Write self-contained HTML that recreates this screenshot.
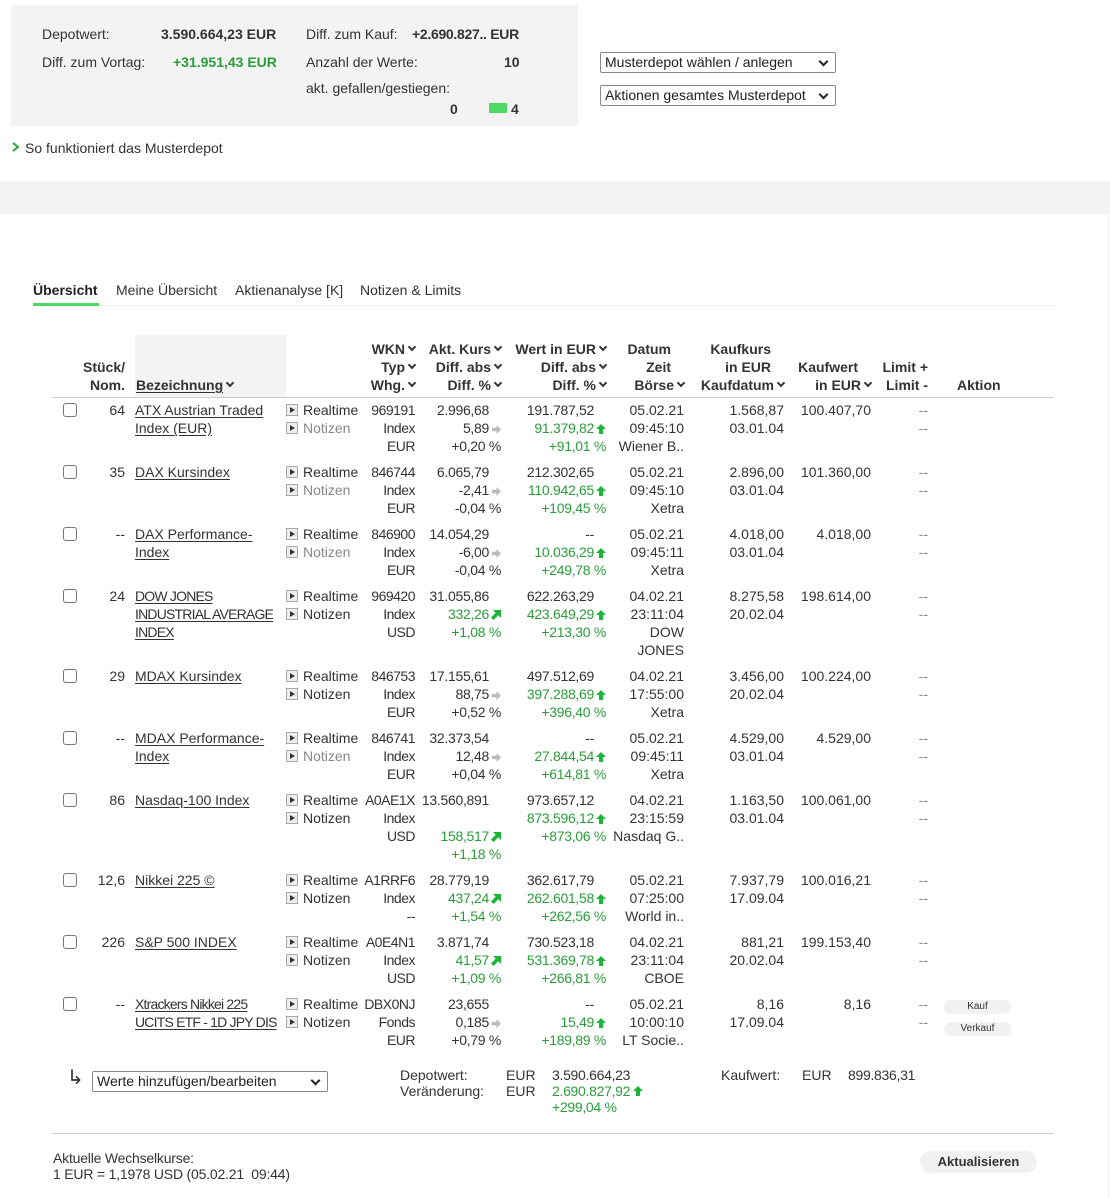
<!DOCTYPE html>
<html><head><meta charset="utf-8">
<style>
*{margin:0;padding:0;box-sizing:border-box}
body{width:1110px;height:1198px;position:relative;background:#fff;font-family:"Liberation Sans",sans-serif;font-size:14px;color:#333;overflow:hidden}
.a{position:absolute;white-space:nowrap;line-height:18px}
.r{text-align:right}
.b{font-weight:bold}
.g{color:#2a9d3a}
.gr{color:#888}
u{text-decoration:underline;text-underline-offset:2px}
.row{position:absolute;left:0;width:1110px;height:80px}
.st{left:80px;width:45px}
.bz{left:135px}
.ic{left:286px}
.wk{left:355px;width:60px;letter-spacing:-0.5px}
.ku{left:405px;width:96px;letter-spacing:-0.3px}
.we{left:500px;width:106px;letter-spacing:-0.3px}
.da{left:610px;width:74px}
.kk{left:700px;width:84px}
.kw{left:790px;width:81px}
.li{left:890px;width:38px}
.p{padding-right:12px;display:inline-block}
.n{letter-spacing:-0.8px}
i{display:inline-block;width:12px;text-align:right}
i svg{vertical-align:-1px}
.cb{position:absolute;left:63px;top:2px;width:14px;height:14px;border:1px solid #767676;border-radius:3px;background:#fff}
.ib{display:inline-block;width:12px;height:12px;border:1px solid #aaa;background:#eee;vertical-align:-1px;margin-right:5px;position:relative}
.ib:after{content:"";position:absolute;left:3px;top:2px;border-left:5px solid #333;border-top:3.5px solid transparent;border-bottom:3.5px solid transparent}
.sel{position:absolute;height:21px;border:1px solid #888;border-radius:2px;background:#fff;font-size:14px;line-height:19px;padding-left:4px;color:#222}
.sel:after{content:"";position:absolute;right:8px;top:5px;width:5px;height:5px;border-right:2px solid #222;border-bottom:2px solid #222;transform:rotate(45deg)}
.hd{font-weight:bold}
.ch{display:inline-block;width:6px;height:6px;border-right:2px solid #333;border-bottom:2px solid #333;transform:rotate(45deg);margin-left:4px;vertical-align:4px}
.pd{padding-right:13px;display:inline-block}
.btn{position:absolute;background:#f0f1f0;border-radius:10px;text-align:center;font-size:10px;color:#333}
</style></head><body>
<svg width="0" height="0" style="position:absolute"><defs>
<symbol id="up" viewBox="0 0 10 10"><path d="M5 0L10 5H7V10H3V5H0Z" fill="#1bb53a"/></symbol>
<symbol id="rt" viewBox="0 0 10 10"><path d="M10 5L5 0V3H0V7H5V10Z" fill="#bbb"/></symbol>
<symbol id="dg" viewBox="0 0 10 10"><path d="M10 0V8L7.3 5.3L2.5 10L0 7.5L4.7 2.7L2 0Z" fill="#1bb53a"/></symbol>
</defs></svg>

<div style="position:absolute;left:11px;top:5px;width:567px;height:121px;background:#f2f3f2"></div>
<div class="a" style="left:42px;top:25px">Depotwert:</div>
<div class="a b" style="left:161px;top:25px">3.590.664,23 EUR</div>
<div class="a" style="left:42px;top:53px">Diff. zum Vortag:</div>
<div class="a b g" style="left:173px;top:53px">+31.951,43 EUR</div>
<div class="a" style="left:306px;top:25px">Diff. zum Kauf:</div>
<div class="a b" style="left:412px;top:25px;letter-spacing:-0.3px">+2.690.827.. EUR</div>
<div class="a" style="left:306px;top:53px">Anzahl der Werte:</div>
<div class="a b" style="left:504px;top:53px">10</div>
<div class="a" style="left:306px;top:79px">akt. gefallen/gestiegen:</div>
<div class="a b" style="left:450px;top:100px">0</div>
<div style="position:absolute;left:489px;top:103px;width:18px;height:10px;background:#4cd964"></div>
<div class="a b" style="left:511px;top:100px">4</div>
<svg style="position:absolute;left:12px;top:142px" width="8" height="10"><path d="M1 1L6 5L1 9" stroke="#3aa84a" stroke-width="2.2" fill="none"/></svg>
<div class="a" style="left:25px;top:139px">So funktioniert das Musterdepot</div>

<div class="sel" style="left:600px;top:52px;width:236px">Musterdepot wählen / anlegen</div>
<div class="sel" style="left:600px;top:85px;width:236px">Aktionen gesamtes Musterdepot</div>

<div style="position:absolute;left:0;top:181px;width:1110px;height:33px;background:#f2f3f2"></div>
<div style="position:absolute;left:1108px;top:214px;width:1px;height:984px;background:#eee"></div>

<div class="a b" style="left:33px;top:281px;color:#222">Übersicht</div>
<div class="a" style="left:116px;top:281px">Meine Übersicht</div>
<div class="a" style="left:235px;top:281px">Aktienanalyse [K]</div>
<div class="a" style="left:360px;top:281px">Notizen &amp; Limits</div>
<div style="position:absolute;left:33px;top:305px;width:1022px;height:1px;background:#eee"></div>
<div style="position:absolute;left:33px;top:303px;width:66px;height:3px;background:#4cd964"></div>

<div style="position:absolute;left:135px;top:335px;width:151px;height:62px;background:#f2f3f2"></div>
<div class="a hd r" style="left:70px;width:55px;top:358px">Stück/<br>Nom.</div>
<div class="a hd" style="left:136px;top:376px"><u>Bezeichnung</u><span class="ch"></span></div>
<div class="a hd r" style="left:340px;width:75px;top:340px">WKN<span class="ch"></span><br>Typ<span class="ch"></span><br>Whg.<span class="ch"></span></div>
<div class="a hd r" style="left:405px;width:96px;top:340px">Akt. Kurs<span class="ch"></span><br>Diff. abs<span class="ch"></span><br>Diff. %<span class="ch"></span></div>
<div class="a hd r" style="left:500px;width:106px;top:340px">Wert in EUR<span class="ch"></span><br>Diff. abs<span class="ch"></span><br>Diff. %<span class="ch"></span></div>
<div class="a hd r" style="left:600px;width:84px;top:340px"><span class="pd">Datum</span><br><span class="pd">Zeit</span><br>Börse<span class="ch"></span></div>
<div class="a hd r" style="left:680px;width:104px;top:340px"><span class="pd">Kaufkurs</span><br><span class="pd">in EUR</span><br>Kaufdatum<span class="ch"></span></div>
<div class="a hd r" style="left:770px;width:101px;top:358px"><span class="pd">Kaufwert</span><br>in EUR<span class="ch"></span></div>
<div class="a hd r" style="left:870px;width:58px;top:358px">Limit +<br>Limit -</div>
<div class="a hd" style="left:957px;top:376px">Aktion</div>
<div style="position:absolute;left:52px;top:397px;width:1002px;height:1px;background:#ccc"></div>

<!-- row 1 -->
<div class="row" style="top:401px"><div class="cb"></div>
<div class="a r st">64</div>
<div class="a bz"><u>ATX Austrian Traded</u><br><u>Index (EUR)</u></div>
<div class="a ic"><span class="ib"></span>Realtime<br><span class="ib"></span><span class="gr">Notizen</span></div>
<div class="a r wk">969191<br>Index<br>EUR</div>
<div class="a r ku"><span class="p">2.996,68</span><br>5,89<i><svg width="9" height="9"><use href="#rt"/></svg></i><br>+0,20 %</div>
<div class="a r we"><span class="p">191.787,52</span><br><span class="g">91.379,82</span><i><svg width="10" height="10"><use href="#up"/></svg></i><br><span class="g">+91,01 %</span></div>
<div class="a r da">05.02.21<br>09:45:10<br>Wiener B..</div>
<div class="a r kk">1.568,87<br>03.01.04</div>
<div class="a r kw">100.407,70</div>
<div class="a r li gr">--<br>--</div>
</div>
<!-- row 2 -->
<div class="row" style="top:463px"><div class="cb"></div>
<div class="a r st">35</div>
<div class="a bz"><u>DAX Kursindex</u></div>
<div class="a ic"><span class="ib"></span>Realtime<br><span class="ib"></span><span class="gr">Notizen</span></div>
<div class="a r wk">846744<br>Index<br>EUR</div>
<div class="a r ku"><span class="p">6.065,79</span><br>-2,41<i><svg width="9" height="9"><use href="#rt"/></svg></i><br>-0,04 %</div>
<div class="a r we"><span class="p">212.302,65</span><br><span class="g">110.942,65</span><i><svg width="10" height="10"><use href="#up"/></svg></i><br><span class="g">+109,45 %</span></div>
<div class="a r da">05.02.21<br>09:45:10<br>Xetra</div>
<div class="a r kk">2.896,00<br>03.01.04</div>
<div class="a r kw">101.360,00</div>
<div class="a r li gr">--<br>--</div>
</div>
<!-- row 3 -->
<div class="row" style="top:525px"><div class="cb"></div>
<div class="a r st">--</div>
<div class="a bz"><u>DAX Performance-</u><br><u>Index</u></div>
<div class="a ic"><span class="ib"></span>Realtime<br><span class="ib"></span><span class="gr">Notizen</span></div>
<div class="a r wk">846900<br>Index<br>EUR</div>
<div class="a r ku"><span class="p">14.054,29</span><br>-6,00<i><svg width="9" height="9"><use href="#rt"/></svg></i><br>-0,04 %</div>
<div class="a r we"><span class="p">--</span><br><span class="g">10.036,29</span><i><svg width="10" height="10"><use href="#up"/></svg></i><br><span class="g">+249,78 %</span></div>
<div class="a r da">05.02.21<br>09:45:11<br>Xetra</div>
<div class="a r kk">4.018,00<br>03.01.04</div>
<div class="a r kw">4.018,00</div>
<div class="a r li gr">--<br>--</div>
</div>
<!-- row 4 -->
<div class="row" style="top:587px"><div class="cb"></div>
<div class="a r st">24</div>
<div class="a bz n"><u>DOW JONES</u><br><u>INDUSTRIAL AVERAGE</u><br><u>INDEX</u></div>
<div class="a ic"><span class="ib"></span>Realtime<br><span class="ib"></span>Notizen</div>
<div class="a r wk">969420<br>Index<br>USD</div>
<div class="a r ku"><span class="p">31.055,86</span><br><span class="g">332,26</span><i><svg width="10" height="10"><use href="#dg"/></svg></i><br><span class="g">+1,08 %</span></div>
<div class="a r we"><span class="p">622.263,29</span><br><span class="g">423.649,29</span><i><svg width="10" height="10"><use href="#up"/></svg></i><br><span class="g">+213,30 %</span></div>
<div class="a r da">04.02.21<br>23:11:04<br>DOW<br>JONES</div>
<div class="a r kk">8.275,58<br>20.02.04</div>
<div class="a r kw">198.614,00</div>
<div class="a r li gr">--<br>--</div>
</div>
<!-- row 5 -->
<div class="row" style="top:667px"><div class="cb"></div>
<div class="a r st">29</div>
<div class="a bz"><u>MDAX Kursindex</u></div>
<div class="a ic"><span class="ib"></span>Realtime<br><span class="ib"></span>Notizen</div>
<div class="a r wk">846753<br>Index<br>EUR</div>
<div class="a r ku"><span class="p">17.155,61</span><br>88,75<i><svg width="9" height="9"><use href="#rt"/></svg></i><br>+0,52 %</div>
<div class="a r we"><span class="p">497.512,69</span><br><span class="g">397.288,69</span><i><svg width="10" height="10"><use href="#up"/></svg></i><br><span class="g">+396,40 %</span></div>
<div class="a r da">04.02.21<br>17:55:00<br>Xetra</div>
<div class="a r kk">3.456,00<br>20.02.04</div>
<div class="a r kw">100.224,00</div>
<div class="a r li gr">--<br>--</div>
</div>
<!-- row 6 -->
<div class="row" style="top:729px"><div class="cb"></div>
<div class="a r st">--</div>
<div class="a bz"><u>MDAX Performance-</u><br><u>Index</u></div>
<div class="a ic"><span class="ib"></span>Realtime<br><span class="ib"></span><span class="gr">Notizen</span></div>
<div class="a r wk">846741<br>Index<br>EUR</div>
<div class="a r ku"><span class="p">32.373,54</span><br>12,48<i><svg width="9" height="9"><use href="#rt"/></svg></i><br>+0,04 %</div>
<div class="a r we"><span class="p">--</span><br><span class="g">27.844,54</span><i><svg width="10" height="10"><use href="#up"/></svg></i><br><span class="g">+614,81 %</span></div>
<div class="a r da">05.02.21<br>09:45:11<br>Xetra</div>
<div class="a r kk">4.529,00<br>03.01.04</div>
<div class="a r kw">4.529,00</div>
<div class="a r li gr">--<br>--</div>
</div>
<!-- row 7 -->
<div class="row" style="top:791px"><div class="cb"></div>
<div class="a r st">86</div>
<div class="a bz"><u>Nasdaq-100 Index</u></div>
<div class="a ic"><span class="ib"></span>Realtime<br><span class="ib"></span>Notizen</div>
<div class="a r wk">A0AE1X<br>Index<br>USD</div>
<div class="a r ku"><span class="p">13.560,891</span><br>&nbsp;<br><span class="g">158,517</span><i><svg width="10" height="10"><use href="#dg"/></svg></i><br><span class="g">+1,18 %</span></div>
<div class="a r we"><span class="p">973.657,12</span><br><span class="g">873.596,12</span><i><svg width="10" height="10"><use href="#up"/></svg></i><br><span class="g">+873,06 %</span></div>
<div class="a r da">04.02.21<br>23:15:59<br>Nasdaq G..</div>
<div class="a r kk">1.163,50<br>03.01.04</div>
<div class="a r kw">100.061,00</div>
<div class="a r li gr">--<br>--</div>
</div>
<!-- row 8 -->
<div class="row" style="top:871px"><div class="cb"></div>
<div class="a r st">12,6</div>
<div class="a bz"><u>Nikkei 225 ©</u></div>
<div class="a ic"><span class="ib"></span>Realtime<br><span class="ib"></span>Notizen</div>
<div class="a r wk">A1RRF6<br>Index<br>--</div>
<div class="a r ku"><span class="p">28.779,19</span><br><span class="g">437,24</span><i><svg width="10" height="10"><use href="#dg"/></svg></i><br><span class="g">+1,54 %</span></div>
<div class="a r we"><span class="p">362.617,79</span><br><span class="g">262.601,58</span><i><svg width="10" height="10"><use href="#up"/></svg></i><br><span class="g">+262,56 %</span></div>
<div class="a r da">05.02.21<br>07:25:00<br>World in..</div>
<div class="a r kk">7.937,79<br>17.09.04</div>
<div class="a r kw">100.016,21</div>
<div class="a r li gr">--<br>--</div>
</div>
<!-- row 9 -->
<div class="row" style="top:933px"><div class="cb"></div>
<div class="a r st">226</div>
<div class="a bz"><u>S&amp;P 500 INDEX</u></div>
<div class="a ic"><span class="ib"></span>Realtime<br><span class="ib"></span>Notizen</div>
<div class="a r wk">A0E4N1<br>Index<br>USD</div>
<div class="a r ku"><span class="p">3.871,74</span><br><span class="g">41,57</span><i><svg width="10" height="10"><use href="#dg"/></svg></i><br><span class="g">+1,09 %</span></div>
<div class="a r we"><span class="p">730.523,18</span><br><span class="g">531.369,78</span><i><svg width="10" height="10"><use href="#up"/></svg></i><br><span class="g">+266,81 %</span></div>
<div class="a r da">04.02.21<br>23:11:04<br>CBOE</div>
<div class="a r kk">881,21<br>20.02.04</div>
<div class="a r kw">199.153,40</div>
<div class="a r li gr">--<br>--</div>
</div>
<!-- row 10 -->
<div class="row" style="top:995px"><div class="cb"></div>
<div class="a r st">--</div>
<div class="a bz n"><u>Xtrackers Nikkei 225</u><br><u>UCITS ETF - 1D JPY DIS</u></div>
<div class="a ic"><span class="ib"></span>Realtime<br><span class="ib"></span>Notizen</div>
<div class="a r wk">DBX0NJ<br>Fonds<br>EUR</div>
<div class="a r ku"><span class="p">23,655</span><br>0,185<i><svg width="9" height="9"><use href="#rt"/></svg></i><br>+0,79 %</div>
<div class="a r we"><span class="p">--</span><br><span class="g">15,49</span><i><svg width="10" height="10"><use href="#up"/></svg></i><br><span class="g">+189,89 %</span></div>
<div class="a r da">05.02.21<br>10:00:10<br>LT Socie..</div>
<div class="a r kk">8,16<br>17.09.04</div>
<div class="a r kw">8,16</div>
<div class="a r li gr">--<br>--</div>
<div class="btn" style="left:944px;top:5px;width:67px;height:14px;line-height:14px">Kauf</div>
<div class="btn" style="left:944px;top:27px;width:67px;height:14px;line-height:14px">Verkauf</div>
</div>

<div class="a" style="left:67px;top:1066px;font-size:20px;line-height:24px">↳</div>
<div class="sel" style="left:92px;top:1071px;width:236px">Werte hinzufügen/bearbeiten</div>
<div class="a" style="left:400px;top:1067px;line-height:16px">Depotwert:<br>Veränderung:</div>
<div class="a" style="left:506px;top:1067px;line-height:16px">EUR<br>EUR</div>
<div class="a" style="left:552px;top:1067px;line-height:16px;letter-spacing:-0.3px">3.590.664,23<br><span class="g">2.690.827,92</span><svg width="10" height="10" style="margin-left:3px"><use href="#up"/></svg><br><span class="g">+299,04 %</span></div>
<div class="a" style="left:721px;top:1067px;line-height:16px">Kaufwert:</div>
<div class="a" style="left:802px;top:1067px;line-height:16px">EUR</div>
<div class="a" style="left:848px;top:1067px;line-height:16px;letter-spacing:-0.3px">899.836,31</div>
<div style="position:absolute;left:52px;top:1133px;width:1002px;height:1px;background:#ccc"></div>
<div class="a" style="left:53px;top:1150px;line-height:16px;letter-spacing:-0.2px">Aktuelle Wechselkurse:<br>1 EUR = 1,1978 USD (05.02.21&nbsp; 09:44)</div>
<div class="btn" style="left:920px;top:1151px;width:117px;height:22px;line-height:22px;font-size:13px;font-weight:bold;border-radius:11px">Aktualisieren</div>
</body></html>
